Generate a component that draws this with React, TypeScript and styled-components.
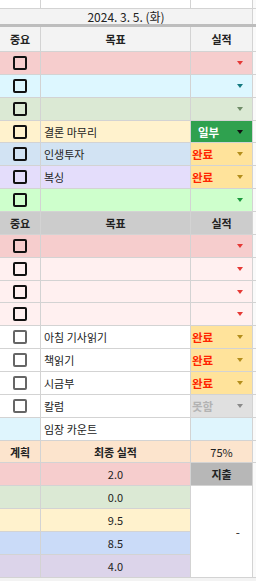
import React from 'react';
import styled, { createGlobalStyle } from 'styled-components';

const GlobalStyle = createGlobalStyle`
    html, body {
        margin: 0;
        padding: 0;
        background: #ffffff;
    }
    body {
        font-family: "Noto Sans CJK KR", "Noto Sans", sans-serif;
    }
`;

const ROW_H = 22.87;
const LINE = '#d3d3d3';

const Sheet = styled.div`
    width: 256px;
    height: 581px;
    overflow: hidden;
    font-size: 11px;
    color: #222;
    background: #f3f3f3;
`;

const Row = styled.div<{ $h?: number; $line?: string; $lineW?: number }>`
    display: grid;
    grid-template-columns: 41px 150px 62px 3px;
    height: ${(p) => p.$h ?? ROW_H}px;
    box-sizing: border-box;
    border-bottom: ${(p) => p.$lineW ?? 1}px solid ${(p) => p.$line ?? LINE};
`;

const Cell = styled.div<{ $bg?: string; $align?: 'left' | 'center' | 'right'; $bold?: boolean; $span?: number }>`
    grid-column: span ${(p) => p.$span ?? 1};
    display: flex;
    align-items: center;
    justify-content: ${(p) => (p.$align === 'center' ? 'center' : p.$align === 'right' ? 'flex-end' : 'flex-start')};
    box-sizing: border-box;
    border-right: 1px solid ${LINE};
    background: ${(p) => p.$bg ?? '#ffffff'};
    font-weight: ${(p) => (p.$bold ? 700 : 400)};
    padding: 0 3px;
    white-space: nowrap;
    overflow: hidden;
`;

const DateCell = styled(Cell)`
    font-size: 12px;
`;

const Edge = styled.div`
    background: #fafafa;
`;

const Check = styled.span<{ $color: string }>`
    width: 14px;
    height: 14px;
    box-sizing: border-box;
    border: 2px solid ${(p) => p.$color};
    border-radius: 2px;
    background: transparent;
`;

const Status = styled.div<{ $bg: string; $color?: string; $pad?: number }>`
    display: flex;
    align-items: center;
    justify-content: space-between;
    box-sizing: border-box;
    border-right: 1px solid ${LINE};
    background: ${(p) => p.$bg};
    color: ${(p) => p.$color ?? '#222'};
    font-weight: 700;
    font-size: 11.5px;
    padding: 0 9px 0 ${(p) => p.$pad ?? 1}px;
`;

const Arrow = styled.span<{ $color: string }>`
    margin-left: auto;
    width: 0;
    height: 0;
    border-left: 3px solid transparent;
    border-right: 3px solid transparent;
    border-top: 4px solid ${(p) => p.$color};
`;

const Bottom = styled.div`
    display: grid;
    grid-template-columns: 41px 150px 62px 3px;
    grid-template-rows: repeat(6, ${ROW_H}px);
`;

const GridCell = styled(Cell)<{ $row?: string }>`
    border-bottom: 1px solid ${LINE};
    grid-row: ${(p) => p.$row ?? 'auto'};
`;

const EdgeCell = styled.div`
    background: #fafafa;
    border-bottom: 1px solid ${LINE};
`;

const Total = styled(GridCell)`
    padding-right: 12px;
    font-size: 12px;
`;

type Goal = { bg: string; text?: string; box: string; status?: { label: string; bg: string; color: string; pad?: number }; arrow?: string };

const first: Goal[] = [
    { bg: '#f6cdcd', box: '#111', arrow: '#e53935' },
    { bg: '#ddf7ff', box: '#111', arrow: '#157a80' },
    { bg: '#dbe9d4', box: '#111', arrow: '#6f8c68' },
    { bg: '#fff2cd', box: '#111', text: '결론 마무리', status: { label: '일부', bg: '#2fa14f', color: '#ffffff', pad: 7 }, arrow: '#111' },
    { bg: '#d2e3f3', box: '#111', text: '인생투자', status: { label: '완료', bg: '#ffe39b', color: '#ff2400' }, arrow: '#b48e1c' },
    { bg: '#e4ddfb', box: '#111', text: '복싱', status: { label: '완료', bg: '#ffe39b', color: '#ff2400' }, arrow: '#b48e1c' },
    { bg: '#ceffcc', box: '#111', arrow: '#1b9a3c' },
];

const second: Goal[] = [
    { bg: '#f6cdcd', box: '#111', arrow: '#e53935' },
    { bg: '#fff0f0', box: '#111', arrow: '#e53935' },
    { bg: '#fff0f0', box: '#111', arrow: '#e53935' },
    { bg: '#fff0f0', box: '#111', arrow: '#e53935' },
    { bg: '#ffffff', box: '#666', text: '아침 기사읽기', status: { label: '완료', bg: '#ffe39b', color: '#ff2400' }, arrow: '#b48e1c' },
    { bg: '#ffffff', box: '#666', text: '책읽기', status: { label: '완료', bg: '#ffe39b', color: '#ff2400' }, arrow: '#b48e1c' },
    { bg: '#ffffff', box: '#666', text: '시금부', status: { label: '완료', bg: '#ffe39b', color: '#ff2400' }, arrow: '#b48e1c' },
    { bg: '#ffffff', box: '#666', text: '칼럼', status: { label: '못함', bg: '#e0e0e0', color: '#b3b3b3' }, arrow: '#8a8a8a' },
];

const plans = [
    { bg: '#f6cdcd', value: '2.0' },
    { bg: '#dbe9d4', value: '0.0' },
    { bg: '#fff2cd', value: '9.5' },
    { bg: '#cadbf8', value: '8.5' },
    { bg: '#dcd4ea', value: '4.0' },
];

const GoalRow: React.FC<{ goal: Goal }> = ({ goal }) => (
    <Row>
        <Cell $bg={goal.bg} $align="center">
            <Check $color={goal.box} />
        </Cell>
        <Cell $bg={goal.bg}>{goal.text}</Cell>
        {goal.status ? (
            <Status $bg={goal.status.bg} $color={goal.status.color} $pad={goal.status.pad}>
                {goal.status.label}
                <Arrow $color={goal.arrow ?? '#111'} />
            </Status>
        ) : (
            <Status $bg={goal.bg}>
                <Arrow $color={goal.arrow ?? '#111'} />
            </Status>
        )}
        <Edge />
    </Row>
);

const Header: React.FC<{ bg: string; h?: number }> = ({ bg, h }) => (
    <Row $h={h}>
        <Cell $bg={bg} $align="center" $bold>중요</Cell>
        <Cell $bg={bg} $align="center" $bold>목표</Cell>
        <Cell $bg={bg} $align="center" $bold>실적</Cell>
        <Edge />
    </Row>
);

export default function App() {
    return (
        <Sheet>
            <GlobalStyle />
            <Row $h={9}>
                <Cell />
                <Cell />
                <Cell />
                <Edge />
            </Row>
            <Row $h={18} $lineW={3} $line="#bdbdbd">
                <DateCell $bg="#f3f3f3" $align="center" $span={3}>
                    2024. 3. 5. (화)
                </DateCell>
                <Edge />
            </Row>
            <Header bg="#f3f3f3" h={25} />
            {first.map((g, i) => (
                <GoalRow key={`a${i}`} goal={g} />
            ))}
            <Header bg="#cccccc" />
            {second.map((g, i) => (
                <GoalRow key={`b${i}`} goal={g} />
            ))}
            <Row>
                <Cell $bg="#dff5fd" />
                <Cell $bg="#ffffff">임장 카운트</Cell>
                <Cell $bg="#dff5fd" />
                <Edge />
            </Row>
            <Bottom>
                <GridCell $bg="#fce4cd" $align="center" $bold>계획</GridCell>
                <GridCell $bg="#fce4cd" $align="center" $bold>최종 실적</GridCell>
                <GridCell $bg="#fce4cd" $align="center">75%</GridCell>
                <EdgeCell />
                {plans.map((p, i) => (
                    <React.Fragment key={p.value + i}>
                        <GridCell $bg={p.bg} $row={`${i + 2}`} style={{ gridColumn: 1 }} />
                        <GridCell $bg={p.bg} $align="center" $row={`${i + 2}`} style={{ gridColumn: 2 }}>
                            {p.value}
                        </GridCell>
                    </React.Fragment>
                ))}
                <GridCell $bg="#b7b7b7" $align="center" $bold $row="2" style={{ gridColumn: 3 }}>지출</GridCell>
                <Total $bg="#ffffff" $align="right" $row="3 / span 4" style={{ gridColumn: 3 }}>-</Total>
                <EdgeCell style={{ gridColumn: 4, gridRow: '2 / span 5' }} />
            </Bottom>
        </Sheet>
    );
}
